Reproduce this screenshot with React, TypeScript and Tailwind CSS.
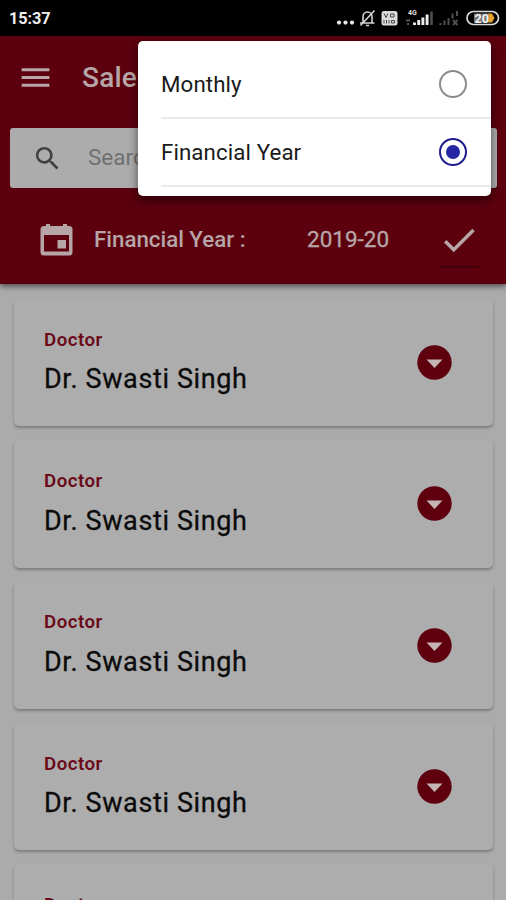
import React, { useState } from 'react';
import { MdCheck, MdMenu, MdSearch } from 'react-icons/md';

type Period = 'Monthly' | 'Financial Year';

const PERIODS: Period[] = ['Monthly', 'Financial Year'];

const DOCTORS = [
  { id: 1, name: 'Dr. Swasti Singh' },
  { id: 2, name: 'Dr. Swasti Singh' },
  { id: 3, name: 'Dr. Swasti Singh' },
  { id: 4, name: 'Dr. Swasti Singh' },
  { id: 5, name: 'Dr. Swasti Singh' },
];

const StatusIcons: React.FC = () => (
  <svg className="w-[166px] h-[28px]" viewBox="334 4 166 28" fill="none">
    {/* notifications */}
    <g fill="#e8e8e8">
      <circle cx="339" cy="22.6" r="2.1" />
      <circle cx="345.5" cy="22.6" r="2.1" />
      <circle cx="352" cy="22.6" r="2.1" />
    </g>
    {/* muted bell */}
    <path d="M360 23h14.500M363 22.500v-5.500c0-3 2-5 4.500-5s4.500 2 4.500 5v5.500M366 25.500h3M360.500 25.500L374.500 10.500" stroke="#d4d4d4" strokeWidth="1.6" />
    {/* VoWiFi */}
    <rect x="381.500" y="11" width="16" height="14.500" rx="2.500" fill="#dcdcdc" />
    <path d="M384 13.500l2 4 2-4M390.500 14h3.500v3h-3.500zM384 20v3.500M386.500 20v3.500M389 20v3.500M391.500 20.500h3v2.500h-3z" stroke="#444" strokeWidth="1" />
    {/* first sim */}
    <text x="408" y="15" fill="#dedede" fontSize="7" fontWeight="700" className="font-['Roboto',sans-serif]">4G</text>
    <path d="M406 20.500h4M407 24h2" stroke="#555" strokeWidth="2" />
    <path d="M414.500 25v-2.500M418.700 25v-5M422.900 25v-7.500M427.100 25v-10.500" stroke="#ededed" strokeWidth="2.900" />
    <path d="M431.500 25V11.500" stroke="#4d4d4d" strokeWidth="2.600" />
    {/* second sim */}
    <path d="M440.500 25v-2M444.500 25v-4.500M448.500 25v-7M452.500 18.500v-5M457 16v-5M453 20l4.500 5M457.500 20L453 25" stroke="#505050" strokeWidth="2" />
    {/* battery */}
    <rect x="467" y="11.500" width="31.500" height="13" rx="6.500" stroke="#dadada" strokeWidth="1.700" />
    <rect x="474" y="13.500" width="15" height="9" fill="#777" />
    <path d="M488.500 13.500h3.500l2.500 4.500-2.500 4.500h-3.500z" fill="#e8a02c" />
    <text x="474.500" y="22.500" fill="#f2f2f2" fontSize="12.500" fontWeight="700" className="font-['Roboto',sans-serif]">20</text>
  </svg>
);

const CalendarIcon: React.FC = () => (
  <svg className="w-[33px] h-[33px] shrink-0" viewBox="0 0 33 33" fill="#b7a6a8">
    <path fillRule="evenodd" d="M4 3h2V1h4v2h13V1h4v2h2a3.500 3.500 0 0 1 3.500 3.500v22.500A3.500 3.500 0 0 1 29 32.500H4A3.500 3.500 0 0 1 .5 29V6.500A3.500 3.500 0 0 1 4 3zM4 12v16.500h25V12z" />
    <path d="M17.500 17h8.500v8.500h-8.500z" />
  </svg>
);

const Radio: React.FC<{ checked: boolean }> = ({ checked }) => (
  <span className={`flex items-center justify-center w-7 h-7 rounded-full border-2 ${checked ? 'border-[#1c1c8c]' : 'border-[#8c8c8c]'}`}>
    {checked && <span className="w-3.5 h-3.5 rounded-full bg-[#2525a5]"></span>}
  </span>
);

const DoctorCard: React.FC<{ name: string }> = ({ name }) => (
  <div className="flex shrink-0 justify-between items-center h-[127.3px] pl-[30px] pr-[41px] rounded-[5px] bg-[#adadad] shadow-[0_2px_3px_rgba(0,0,0,0.28)]">
    <div>
      <div className="text-[18.7px] leading-[24px] font-semibold tracking-[0.5px] text-[#6b0a18]">Doctor</div>
      <div className="mt-[9.500px] text-[27px] leading-[36px] tracking-[0.62px] text-[#0b0b0b] [-webkit-text-stroke:0.3px_#0b0b0b]">{name}</div>
    </div>
    <svg className="w-[35px] h-[35px]" viewBox="0 0 35 35">
      <circle cx="17.500" cy="17.500" r="17.200" fill="#5f000e" />
      <path d="M9.500 14.500h16l-8 8.500z" fill="#c4b5b4" />
    </svg>
  </div>
);

const App: React.FC = () => {
  const [period, setPeriod] = useState<Period>('Financial Year');

  return (
    <div className="relative flex flex-col w-full h-[900px] overflow-hidden bg-[#ababab] font-['Roboto',sans-serif]">
      <div className="flex shrink-0 justify-between items-center h-9 pl-[9px] pr-[6px] bg-black">
        <span className="pt-[3px] text-[16.3px] font-bold tracking-[-0.1px] text-[#eeeeee]">15:37</span>
        <StatusIcons />
      </div>

      <header className="relative shrink-0 h-[248px] bg-[#5c000e] shadow-[0_2px_6px_rgba(0,0,0,0.6)]">
        <div className="flex items-center h-[83px] pl-[17px]">
          <MdMenu className="w-[37px] h-[37px] text-[#b7a6a8]" />
          <h1 className="ml-[28px] text-[28px] font-medium tracking-[0.2px] text-[#b7a6a8]">Sales</h1>
        </div>

        <div className="flex items-center h-[60px] mt-[9px] ml-[10px] mr-[9px] pl-[22px] rounded-[3px] bg-[#acacac]">
          <MdSearch className="w-[31px] h-[31px] text-[#404040]" />
          <span className="ml-[25px] text-[22.500px] text-[#707070]">Search</span>
        </div>

        <div className="flex items-center h-[96px] pt-[7px] pl-[40px]">
          <CalendarIcon />
          <span className="w-[213px] ml-[21px] text-[22.300px] font-medium text-[#b7a6a8]">Financial Year :</span>
          <span className="w-[131px] text-[22.500px] text-[#b7a6a8] [-webkit-text-stroke:0.3px_#b7a6a8]">2019-20</span>
          <span className="flex items-center h-[52px] px-px -ml-px rounded-[4px] shadow-[0_3px_2px_-2px_rgba(0,0,0,0.5)]">
            <MdCheck className="w-[42px] h-[42px] text-[#b7a6a8]" />
          </span>
        </div>
      </header>

      <main className="flex flex-1 flex-col gap-[14px] pt-[15px] pl-[14px] pr-[13px] min-h-0">
        {DOCTORS.map(doctor => (
          <DoctorCard key={doctor.id} name={doctor.name} />
        ))}
      </main>

      <div className="absolute left-[138px] top-[41px] w-[353px] h-[155px] pl-[23px] pt-[10px] rounded-[5px] bg-white shadow-[0_4px_10px_rgba(0,0,0,0.55)]">
        {PERIODS.map(item => (
          <button
            key={item}
            onClick={() => setPeriod(item)}
            className="flex justify-between items-center w-full h-[68px] pr-[24px] border-b-2 border-[#e9e9e9] text-[22.300px] tracking-[0.1px] text-[#1a1a1a]"
          >
            <span className="pt-px">{item}</span>
            <Radio checked={period === item} />
          </button>
        ))}
      </div>
    </div>
  );
};

export default App;
